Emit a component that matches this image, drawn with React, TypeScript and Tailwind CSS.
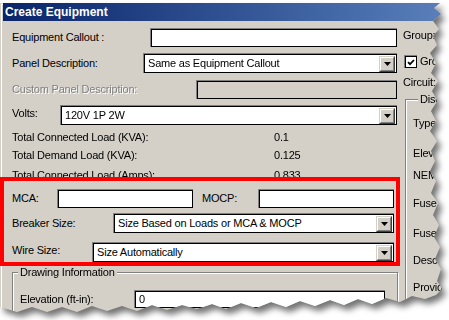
import type { ReactNode } from "react";

const FONT = "font-['Liberation_Sans',Arial,sans-serif]";

function Field({
  className = "",
  disabled = false,
  children,
}: {
  className?: string;
  disabled?: boolean;
  children?: ReactNode;
}) {
  return (
    <div className={`flex border-t border-l border-[#808080] ${className}`}>
      <div
        className={`flex min-w-0 flex-1 items-center border border-black ${
          disabled ? "bg-[#d4d0c8]" : "bg-white"
        }`}
      >
        {children}
      </div>
    </div>
  );
}

function DropButton() {
  return (
    <div className="mr-px flex h-[16px] w-[16px] shrink-0 border border-t-[#d4d0c8] border-l-[#d4d0c8] border-r-[#404040] border-b-[#404040]">
      <div className="flex flex-1 items-center justify-center border border-t-white border-l-white border-r-[#808080] border-b-[#808080] bg-[#d4d0c8]">
        <svg width="7" height="4" viewBox="0 0 7 4">
          <path d="M0 0h7L3.5 4z" fill="#000" />
        </svg>
      </div>
    </div>
  );
}

function Combo({ value, className = "" }: { value: string; className?: string }) {
  return (
    <Field className={className}>
      <span className="min-w-0 flex-1 truncate pl-[3px]">{value}</span>
      <DropButton />
    </Field>
  );
}

function CheckBox() {
  return (
    <div className="flex h-[13px] w-[13px] shrink-0 border-t border-l border-[#808080]">
      <div className="flex flex-1 items-center justify-center border border-black bg-white">
        <svg width="8" height="7" viewBox="0 0 8 7">
          <path d="M1 3.2 3 5.2 7 1" fill="none" stroke="#000" strokeWidth="1.8" />
        </svg>
      </div>
    </div>
  );
}

const rightLabels = [
  { text: "Type:", mt: "mt-[10px]" },
  { text: "Elevation:", mt: "mt-[16px]" },
  { text: "NEMA Type:", mt: "mt-[8px]" },
  { text: "Fuse Type:", mt: "mt-[14px]" },
  { text: "Fuse Size:", mt: "mt-[16px]" },
  { text: "Description:", mt: "mt-[13px]" },
  { text: "Provided By:", mt: "mt-[13px]" },
];

export default function App() {
  return (
    <div className={`h-[320px] w-[449px] overflow-hidden bg-white text-[11px] tracking-[-0.2px] text-black ${FONT}`}>
      <div className="h-full w-full [filter:drop-shadow(4px_5px_3px_rgba(0,0,0,0.55))]">
        <div className="h-full w-full bg-[#d4d0c8] shadow-[inset_1px_1px_0_#d4d0c8,inset_2px_2px_0_#fff] [clip-path:polygon(0_0,440px_0,434px_5px,441px_11px,433px_18px,439px_26px,433px_33px,437px_42px,430px_50px,436px_60px,431px_70px,438px_78px,432px_88px,437px_98px,431px_108px,436px_118px,430px_128px,437px_138px,431px_148px,435px_158px,430px_168px,436px_178px,431px_190px,438px_200px,433px_212px,439px_222px,434px_234px,440px_244px,435px_256px,441px_266px,437px_278px,442px_286px,436px_292px,425px_296px,412px_293px,400px_299px,386px_295px,372px_301px,358px_296px,344px_302px,330px_297px,315px_303px,300px_298px,286px_304px,271px_299px,256px_305px,241px_300px,226px_306px,212px_301px,197px_306px,182px_302px,167px_307px,152px_302px,137px_308px,122px_303px,107px_308px,92px_303px,77px_309px,62px_304px,47px_309px,32px_304px,17px_309px,0_304px)]">
          {/* title bar */}
          <div className="ml-[3px] mt-[3px] flex h-[18px] items-center bg-linear-to-r from-[#0a246a] to-[#5b80bb] pl-[2px] text-[12px] font-bold tracking-normal text-white">
            Create Equipment
          </div>

          <div className="flex">
            {/* left column */}
            <div className="w-[400px] shrink-0">
              <div className="mt-[7px] flex h-[19px] items-center pl-[12px] pr-[3px]">
                <span className="w-[138px] shrink-0">Equipment Callout :</span>
                <Field className="h-[19px] flex-1" />
              </div>
              <div className="mt-[6px] flex h-[20px] items-center pl-[12px] pr-[3px]">
                <span className="w-[131px] shrink-0">Panel Description:</span>
                <Combo className="h-[20px] flex-1" value="Same as Equipment Callout" />
              </div>
              <div className="mt-[7px] flex h-[19px] items-center pl-[12px] pr-[3px]">
                <span className="w-[184px] shrink-0 text-[#808080] [text-shadow:1px_1px_0_#fff]">
                  Custom Panel Description:
                </span>
                <Field className="h-[19px] flex-1" disabled />
              </div>
              <div className="mt-[6px] flex h-[20px] items-center pl-[12px] pr-[3px]">
                <span className="w-[48px] shrink-0 -translate-y-[2px]">Volts:</span>
                <Combo className="h-[20px] flex-1" value="120V 1P 2W" />
              </div>

              <div className="mt-[3px] flex h-[18px] items-center pl-[12px]">
                <span className="w-[262px] shrink-0">Total Connected Load (KVA):</span>
                <span>0.1</span>
              </div>
              <div className="flex h-[18px] items-center pl-[12px]">
                <span className="w-[262px] shrink-0">Total Demand Load (KVA):</span>
                <span>0.125</span>
              </div>
              <div className="flex h-[13px] items-start pl-[12px] pt-[2px] leading-[18px]">
                <span className="w-[262px] shrink-0">Total Connected Load (Amps):</span>
                <span>0.833</span>
              </div>

              {/* highlighted block */}
              <div className="relative border-4 border-[#ff0000] bg-[#d4d0c8]">
                <div className="mt-[8px] flex h-[19px] items-center pl-[8px] pr-[2px]">
                  <span className="w-[45px] shrink-0">MCA:</span>
                  <Field className="h-[19px] w-[136px]" />
                  <span className="ml-[9px] w-[56px] shrink-0">MOCP:</span>
                  <Field className="h-[19px] flex-1" />
                </div>
                <div className="mt-[5px] flex h-[20px] items-center pl-[8px] pr-[2px]">
                  <span className="w-[101px] shrink-0">Breaker Size:</span>
                  <Combo className="h-[20px] flex-1" value="Size Based on Loads or MCA & MOCP" />
                </div>
                <div className="mt-[9px] flex h-[20px] items-center pl-[8px] pr-[2px]">
                  <span className="w-[80px] shrink-0 -translate-y-[2px]">Wire Size:</span>
                  <Combo className="h-[20px] flex-1" value="Size Automatically" />
                </div>
              </div>

              <fieldset className="ml-[12px] mr-[2px] h-[60px] border border-[#808080] shadow-[inset_1px_1px_0_#fff,1px_1px_0_#fff]">
                <legend className="ml-[5px] bg-[#d4d0c8] px-[2px] leading-[13px]">
                  Drawing Information
                </legend>
                <div className="mt-[11px] flex h-[18px] items-center pl-[7px]">
                  <span className="w-[114px] shrink-0">Elevation (ft-in):</span>
                  <Field className="h-[18px] w-[251px]">
                    <span className="pl-[3px]">0</span>
                  </Field>
                </div>
              </fieldset>
            </div>

            {/* right column */}
            <div className="min-w-0 flex-1 whitespace-nowrap pl-[3px]">
              <div className="mt-[7px] flex h-[14px] items-center">Group:</div>
              <div className="mt-[13px] flex h-[13px] items-center gap-[3px] pl-px">
                <CheckBox />
                <span>Group Circuits</span>
              </div>
              <div className="mt-[7px] flex h-[14px] items-center">Circuit:</div>
              <fieldset className="ml-[2px] mt-[4px] h-[240px] w-[200px] border border-[#808080] pl-[7px] shadow-[inset_1px_1px_0_#fff,1px_1px_0_#fff]">
                <legend className="ml-[5px] bg-[#d4d0c8] px-[2px] leading-[13px]">
                  Disconnect
                </legend>
                {rightLabels.map((l) => (
                  <div key={l.text} className={`${l.mt} flex h-[14px] items-center`}>
                    {l.text}
                  </div>
                ))}
              </fieldset>
            </div>
          </div>
        </div>
      </div>
    </div>
  );
}
